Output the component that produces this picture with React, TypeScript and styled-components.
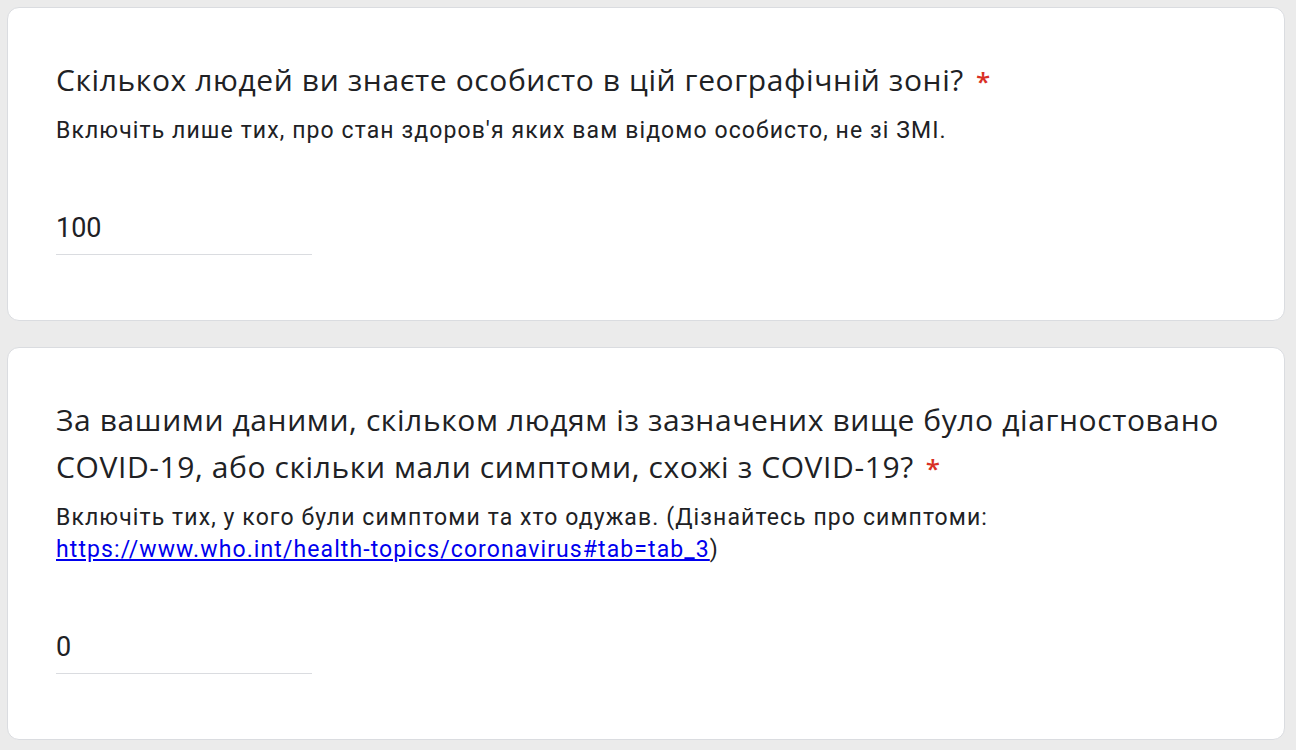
import React from "react";
import styled, { createGlobalStyle } from "styled-components";

const Global = createGlobalStyle`
  html, body { margin: 0; padding: 0; background: #ebebeb; }
  body { font-family: Roboto, "Liberation Sans", sans-serif; }
`;

const Page = styled.div`
  display: flex;
  flex-direction: column;
  gap: 26px;
  padding: 7px 11px 0 7px;
`;

const Card = styled.section`
  background: #fff;
  border: 1px solid #dadce0;
  border-radius: 12px;
  padding: 48px 48px 65px 48px;
`;

const Title = styled.div`
  font-family: "Open Sans", Roboto, sans-serif;
  font-size: 30px;
  line-height: 47px;
  color: #202124;
  letter-spacing: 0.6px;
`;

const Star = styled.span`
  color: #d93025;
  margin-left: 12px;
  font-size: 26px;
  font-weight: 600;
  line-height: 0;
`;

const Desc = styled.div`
  margin-top: 12px;
  font-family: Roboto, sans-serif;
  font-size: 23px;
  line-height: 32px;
  color: #202124;
  letter-spacing: 1.1px;
`;

const Link = styled.a`
  color: #0000ee;
  text-decoration: underline;
  white-space: nowrap;
`;

const Input = styled.div`
  margin-top: 65px;
  width: 256px;
  font-family: Roboto, sans-serif;
  font-size: 27px;
  line-height: 32px;
  color: #202124;
  padding-bottom: 10px;
  border-bottom: 1px solid #dadce0;
`;

export default function App() {
  return (
    <>
      <Global />
      <Page>
        <Card>
          <Title>
            Скількох людей ви знаєте особисто в цій географічній зоні?<Star>*</Star>
          </Title>
          <Desc>Включіть лише тих, про стан здоров'я яких вам відомо особисто, не зі ЗМІ.</Desc>
          <Input>100</Input>
        </Card>
        <Card>
          <Title>
            За вашими даними, скільком людям із зазначених вище було діагностовано COVID-19, або скільки мали симптоми, схожі з COVID-19?<Star>*</Star>
          </Title>
          <Desc>
            Включіть тих, у кого були симптоми та хто одужав. (Дізнайтесь про симптоми:{" "}
            <Link href="#">https://www.who.int/health-topics/coronavirus#tab=tab_3</Link>)
          </Desc>
          <Input>0</Input>
        </Card>
      </Page>
    </>
  );
}
